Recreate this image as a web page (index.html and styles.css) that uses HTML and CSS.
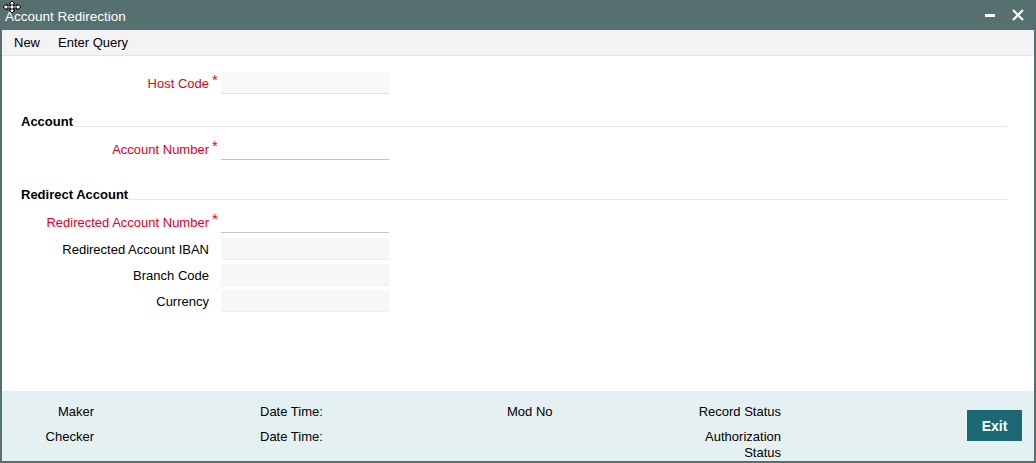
FILE: index.html
```html
<!DOCTYPE html>
<html lang="en">
<head>
    <meta charset="UTF-8">
    <title>Account Redirection</title>
    <link rel="stylesheet" href="styles.css">
</head>
<body>
    <div class="window">
        <!-- Title bar -->
        <div class="titlebar">
            <span class="title">Account Redirection</span>
            <div class="win-btns">
                <span class="win-min"></span>
                <svg class="win-close" width="12" height="12" viewBox="0 0 12 12">
                    <path d="M1 1 L11 11 M11 1 L1 11" stroke="#fff" stroke-width="2.2"/>
                </svg>
            </div>
        </div>
        <svg class="move-cursor" width="22" height="14" viewBox="0 0 22 14">
            <path d="M11 1 L8 4 H10 V6 H6 V4 L2 7 L6 10 V8 H10 V10 H8 L11 13 L14 10 H12 V8 H16 V10 L20 7 L16 4 V6 H12 V4 H14 Z" fill="#fff" stroke="#000" stroke-width="1"/>
        </svg>

        <!-- Toolbar -->
        <div class="toolbar">
            <a>New</a>
            <a>Enter Query</a>
        </div>

        <!-- Form -->
        <div class="content">
            <div class="row">
                <label class="lbl req">Host Code</label>
                <span class="star">*</span>
                <div class="field grey"></div>
            </div>

            <div class="section-head"><span>Account</span><i></i></div>
            <div class="row first">
                <label class="lbl req">Account Number</label>
                <span class="star">*</span>
                <div class="field line"></div>
            </div>

            <div class="section-head second"><span>Redirect Account</span><i></i></div>
            <div class="row first">
                <label class="lbl req">Redirected Account Number</label>
                <span class="star">*</span>
                <div class="field line"></div>
            </div>
            <div class="row next">
                <label class="lbl">Redirected Account IBAN</label>
                <span class="star"></span>
                <div class="field ro"></div>
            </div>
            <div class="row">
                <label class="lbl">Branch Code</label>
                <span class="star"></span>
                <div class="field ro"></div>
            </div>
            <div class="row">
                <label class="lbl">Currency</label>
                <span class="star"></span>
                <div class="field ro"></div>
            </div>
        </div>

        <!-- Audit footer -->
        <div class="footer">
            <div class="col c1">
                <span>Maker</span>
                <span>Checker</span>
            </div>
            <div class="col c2">
                <span>Date Time:</span>
                <span>Date Time:</span>
            </div>
            <div class="col c3">
                <span>Mod No</span>
            </div>
            <div class="col c4">
                <span>Record Status</span>
                <span>Authorization Status</span>
            </div>
            <button class="exit">Exit</button>
        </div>
    </div>
</body>
</html>
```

FILE: styles.css
```css
/* General */
body {
    margin: 0;
    font-family: "Liberation Sans", Arial, sans-serif;
    font-size: 13px;
    color: #000;
    background: #fff;
}

.window {
    width: 1036px;
    height: 463px;
    box-sizing: border-box;
    display: flex;
    flex-direction: column;
    position: relative;
    border: 2px solid #56706f;
    border-top: none;
}

/* Title bar */
.titlebar {
    height: 30px;
    margin: 0 -2px;
    background: #56706f;
    color: #fff;
    display: flex;
    align-items: center;
    justify-content: space-between;
    padding: 0 12px 0 5px;
}

.title {
    font-size: 13.5px;
    padding-top: 2px;
}

.win-btns {
    display: flex;
    align-items: center;
    gap: 17px;
}

.win-min {
    width: 10px;
    height: 3px;
    background: #fff;
}

.move-cursor {
    position: absolute;
    left: -1px;
    top: 0;
}

/* Toolbar */
.toolbar {
    height: 25px;
    background: #f3f3f5;
    border-bottom: 1px solid #e4e4e6;
    display: flex;
    align-items: center;
    padding-left: 12px;
    gap: 18px;
}

.toolbar a {
    cursor: pointer;
}

/* Form */
.content {
    flex: 1;
    padding-top: 14px;
}

.row {
    display: flex;
    align-items: center;
    height: 26px;
}

.row.first {
    margin-top: 6px;
}

.row.next {
    margin-top: 1px;
}

.lbl {
    width: 207px;
    text-align: right;
}

.lbl.req {
    color: #e2001a;
}

.star {
    width: 12px;
    color: #f00;
    font-size: 15px;
    padding-left: 3px;
    box-sizing: border-box;
    align-self: flex-start;
    margin-top: 1px;
}

.field {
    width: 168px;
    height: 22px;
    box-sizing: border-box;
}

.field.grey {
    background: #f9f9f9;
    border-bottom: 1px solid #e2e2e2;
}

.field.line {
    border-bottom: 1px solid #c4c4c4;
}

.field.ro {
    background: #f7f7f7;
    border-bottom: 1px solid #eeeeee;
}

.section-head {
    display: flex;
    margin: 18px 27px 0 19px;
    height: 16px;
}

.section-head.second {
    margin-top: 25px;
}

.section-head span {
    font-weight: bold;
    line-height: 16px;
}

.section-head i {
    flex: 1;
    height: 1px;
    margin-top: 12px;
    background: #e8e8e8;
}

/* Footer */
.footer {
    height: 70px;
    background: #e4f0f2;
    display: flex;
    padding-top: 13px;
    box-sizing: border-box;
}

.col {
    display: flex;
    flex-direction: column;
    gap: 9px;
    line-height: 16px;
}

.col span {
    display: block;
}

.c1 {
    width: 92px;
    text-align: right;
}

.c2 {
    margin-left: 166px;
    width: 247px;
}

.c3 {
    width: 184px;
}

.c4 {
    width: 90px;
    text-align: right;
}

.exit {
    margin: 6px 12px 0 auto;
    width: 55px;
    height: 31px;
    border: none;
    background: #1c6874;
    color: #fff;
    font-family: "Liberation Sans", Arial, sans-serif;
    font-weight: bold;
    font-size: 14px;
    cursor: pointer;
}
```
